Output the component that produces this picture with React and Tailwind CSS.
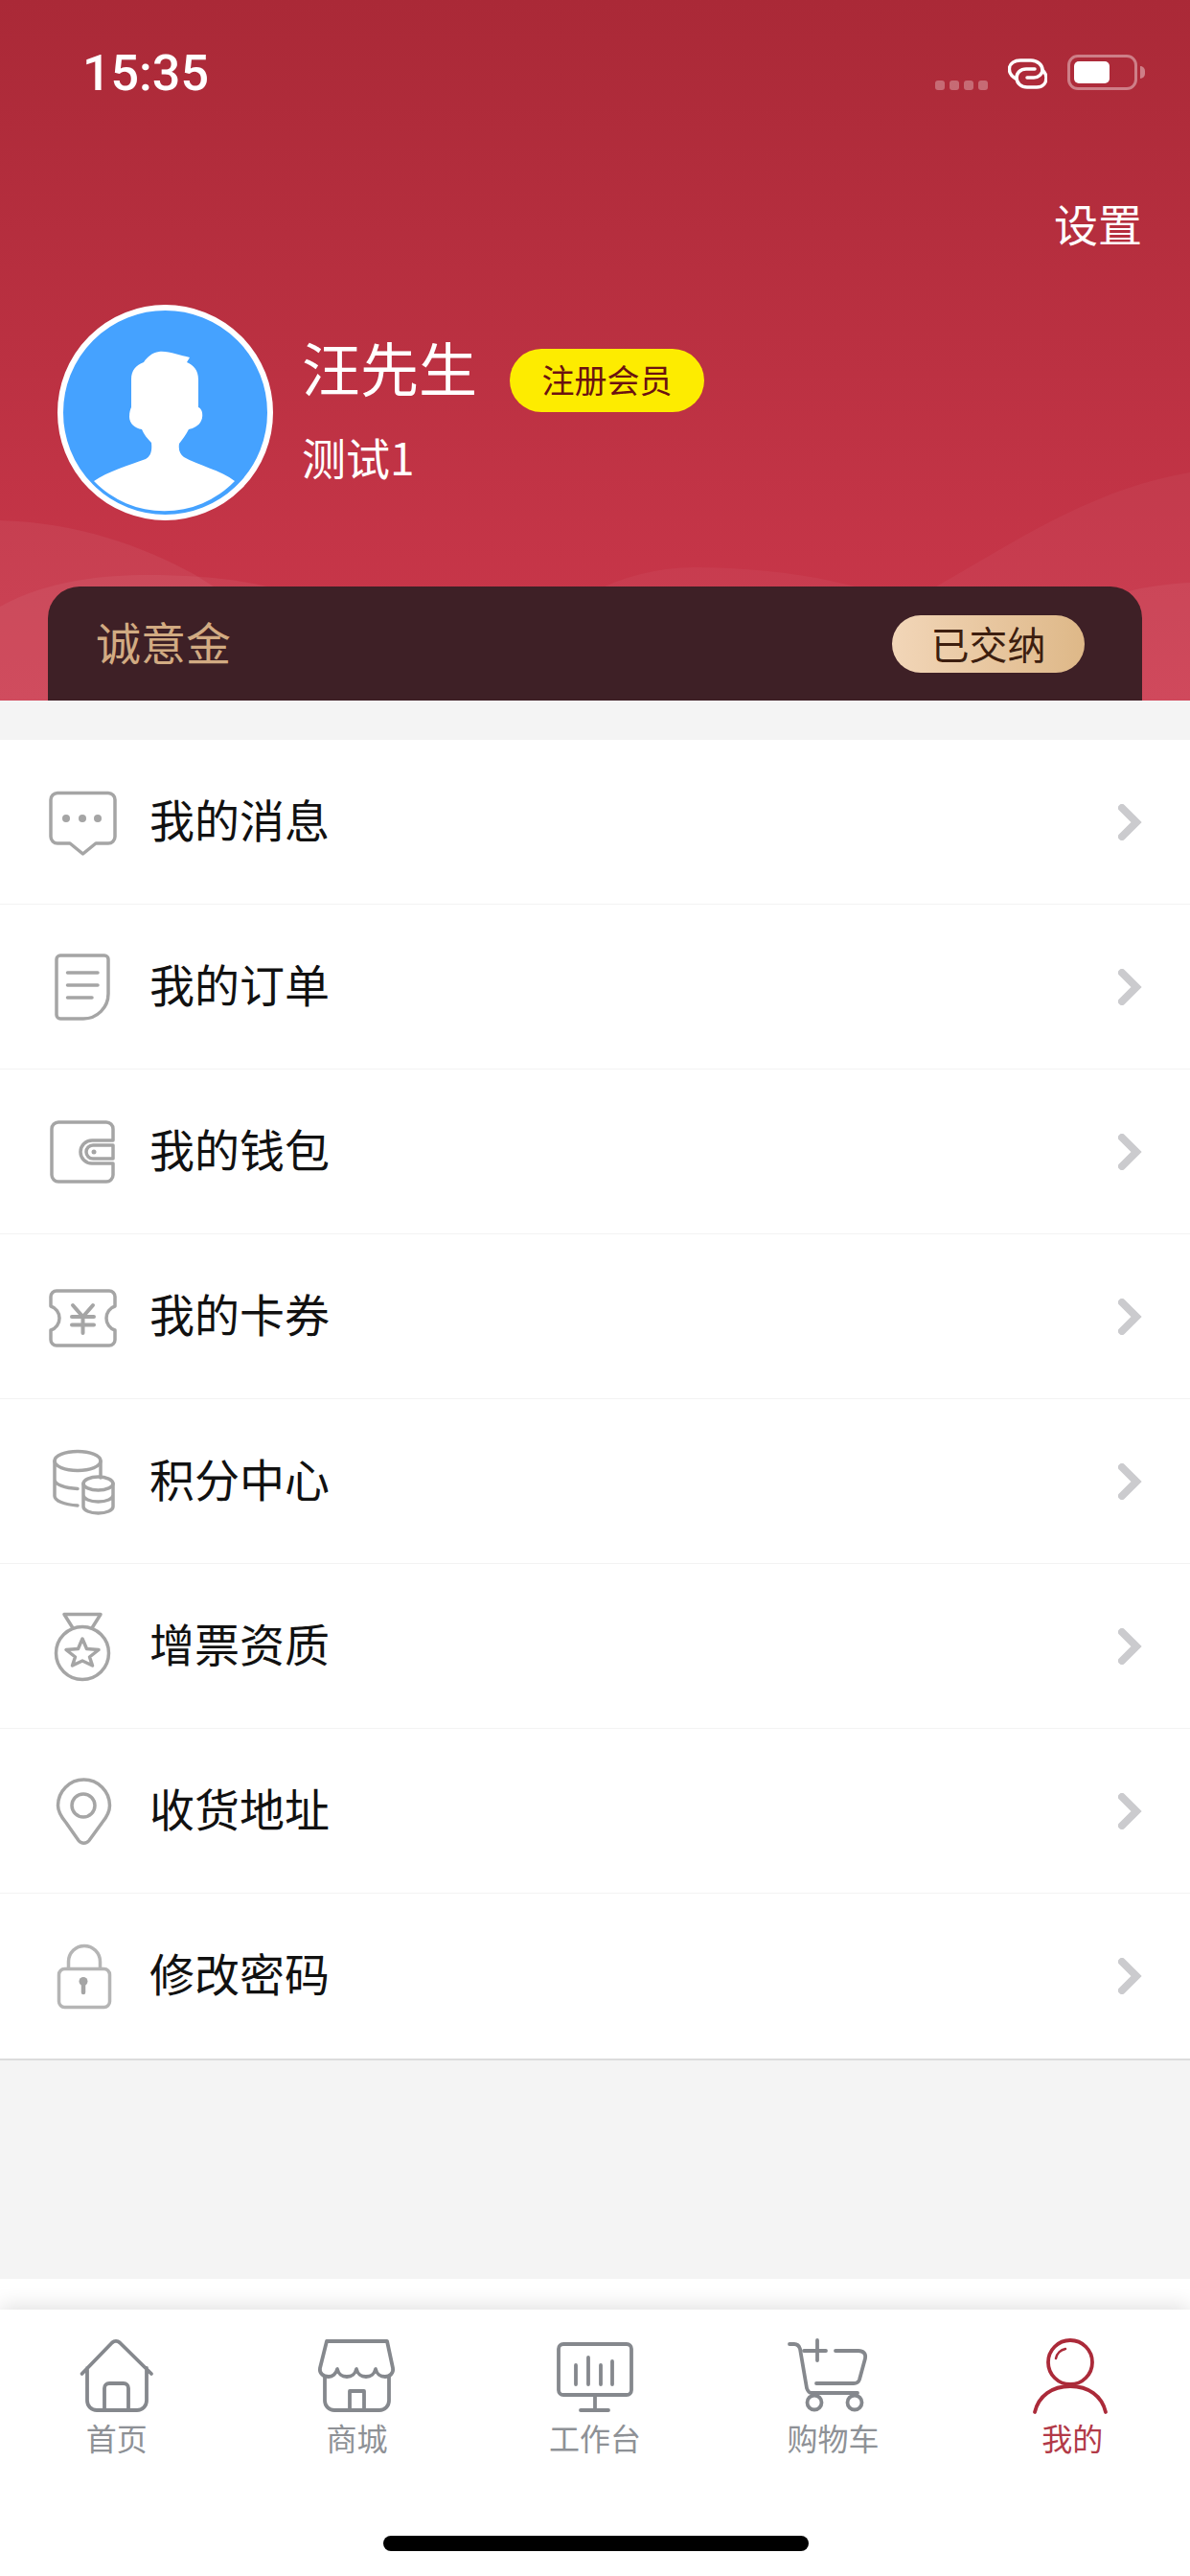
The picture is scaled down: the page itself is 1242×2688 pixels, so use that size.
import React from "react";

const G = "#a5a5a5";
const Ico = ({ children, color = G, sw = 3.5 }) => (
  <svg width="90" height="90" viewBox="0 0 90 90" fill="none" stroke={color} strokeWidth={sw} strokeLinecap="round" strokeLinejoin="round" className="shrink-0">
    {children}
  </svg>
);

const MsgIcon = () => (
  <Ico>
    <path d="M19 14.500H72a7 7 0 0 1 7 7V60a7 7 0 0 1-7 7H59L45.500 78 32 67H19a7 7 0 0 1-7-7V21.500a7 7 0 0 1 7-7z" />
    <circle cx="28" cy="41" r="4" fill={G} stroke="none" />
    <circle cx="45" cy="41" r="4" fill={G} stroke="none" />
    <circle cx="61" cy="41" r="4" fill={G} stroke="none" />
  </Ico>
);
const OrderIcon = () => (
  <Ico>
    <path d="M22 12H68a4 4 0 0 1 4 4V52a26 26 0 0 1-26 26H22a4 4 0 0 1-4-4V16a4 4 0 0 1 4-4z" />
    <path d="M29.500 30H61M29.500 43H61M29.500 56H55" />
  </Ico>
);
const WalletIcon = () => (
  <Ico>
    <path d="M77 33V21a7 7 0 0 0-7-7H20a7 7 0 0 0-7 7V69a7 7 0 0 0 7 7H70a7 7 0 0 0 7-7V57H55a12 12 0 0 1 0-24H77" />
    <path d="M77 38H56a7 7 0 0 0 0 14H77V38z" />
    <circle cx="57" cy="45" r="2.500" fill={G} stroke="none" />
  </Ico>
);
const TicketIcon = () => (
  <Ico>
    <path d="M18 18H73a6 6 0 0 1 6 6V34a13 13 0 0 0-9 12.500A13 13 0 0 0 79 59V69a6 6 0 0 1-6 6H18a6 6 0 0 1-6-6V59a13 13 0 0 0 9-12.500A13 13 0 0 0 12 34V24a6 6 0 0 1 6-6z" />
    <path d="M35 33L45.500 45 56 33M34 45H57M34 53.500H57M45.500 45V62" strokeWidth="4" />
  </Ico>
);
const CoinsIcon = () => (
  <Ico>
    <ellipse cx="40" cy="23.500" rx="24" ry="10" />
    <path d="M16 23.500V60C16 65 26 69 40 70M16 43C16 48 27 52 40 52.500M64 23.500V41" />
    <ellipse cx="61.500" cy="47" rx="15.500" ry="7" />
    <path d="M46 47V71C46 75 53 78 61.500 78S77 75 77 71V47M46 59C46 63 53 66 61.500 66S77 63 77 59" />
  </Ico>
);
const MedalIcon = () => (
  <Ico>
    <circle cx="45" cy="52" r="27.500" />
    <path d="M34.500 25L26 11.500H64L55.500 25" />
    <path d="M45 37L49.500 47.500 62 48.500 52.500 56 55.500 65 45 60 34.500 65 37.500 56 28 48.500 40.500 47.500z" />
  </Ico>
);
const PinIcon = () => (
  <Ico>
    <path d="M46.500 12a27 27 0 0 1 27 27c0 7-3 12-8 18L52 75.500a7 7 0 0 1-11 0L28 57c-5-6-8.500-11-8.500-18a27 27 0 0 1 27-27z" />
    <circle cx="46" cy="39" r="12" />
  </Ico>
);
const LockIcon = () => (
  <Ico color="#b5b5b5">
    <rect x="20.500" y="37.500" width="53" height="40" rx="6" />
    <path d="M30.500 37V30a16.500 16.500 0 0 1 33 0V37" />
    <circle cx="46" cy="50.500" r="4.500" fill="#a5a5a5" stroke="none" />
    <path d="M46 51V62" stroke="#a5a5a5" strokeWidth="4.500" />
  </Ico>
);

const rows = [
  ["我的消息", MsgIcon],
  ["我的订单", OrderIcon],
  ["我的钱包", WalletIcon],
  ["我的卡券", TicketIcon],
  ["积分中心", CoinsIcon],
  ["增票资质", MedalIcon],
  ["收货地址", PinIcon],
  ["修改密码", LockIcon],
];

const Tab = ({ label, active, labelClass = "", children }) => (
  <div className="flex flex-col items-center">
    <svg width="80" height="80" viewBox="0 0 80 80" fill="none" stroke={active ? "#ab2a39" : "#85888d"} strokeWidth="3.800" strokeLinecap="round" strokeLinejoin="round" className="overflow-visible">
      {children}
    </svg>
    <span className={`mt-[6px] text-[32px] leading-[34px] ${labelClass} ${active ? "text-[#b23a48]" : "text-[#8e9196]"}`}>{label}</span>
  </div>
);

export default function App() {
  return (
    <div className="w-[1242px] h-[2688px] flex flex-col bg-[#f4f4f4] overflow-hidden font-['Noto_Sans_CJK_SC','Liberation_Sans',sans-serif]">
      <header className="relative h-[731px] shrink-0 flex flex-col bg-gradient-to-b from-[#aa2937] to-[#cc384c]">
        <svg className="absolute inset-0" width="1242" height="731" viewBox="0 0 1242 731" fill="#ffffff" fillOpacity="0.055">
          <path d="M0 543C80 545 150 570 204 600C260 635 330 680 420 731H0Z" />
          <path d="M0 633C50 605 110 600 153 600C210 600 260 605 300 618C360 640 420 680 480 731H0Z" />
          <path d="M480 731C560 640 640 592 724 592C790 592 850 600 900 614C960 632 1000 660 1040 731Z" fillOpacity="0.04" />
          <path d="M840 731C900 660 950 628 977 612C1060 565 1140 510 1242 493V731Z" fillOpacity="0.04" />
          <path d="M980 731C1100 630 1170 612 1242 608V731Z" />
        </svg>

        <div className="relative flex justify-between pt-[51px] pl-[86px] pr-[55px]">
          <span className="font-['Roboto',sans-serif] font-medium text-[52px] leading-[51px] text-white">15:35</span>
          <div className="flex items-end h-[37px] mt-[6px]">
            <div className="flex gap-[5px]">
              <i className="w-[10px] h-[10px] rounded-[3px] bg-white/30" />
              <i className="w-[10px] h-[10px] rounded-[3px] bg-white/30" />
              <i className="w-[10px] h-[10px] rounded-[3px] bg-white/30" />
              <i className="w-[10px] h-[10px] rounded-[3px] bg-white/30" />
            </div>
            <svg className="ml-[21px] mb-[1px]" width="41" height="32" viewBox="0 0 41 32" fill="none" stroke="#fff" strokeWidth="3.500" strokeLinecap="round">
              <path d="M8 21C3 18 1 14 1.500 10C2 5 7 2 13 2H24C31 2 36 7 36 12C36 16 32 20 27 20H20" />
              <path d="M28 11H19C13 11 9 15 9 20C9 26 14 30 20 30H30C36 30 40 26 40 20C40 17 38 14 36 12" />
            </svg>
            <div className="ml-[21px] w-[73px] h-[37px] rounded-[11px] border-[3px] border-white/40 p-[4px] flex relative">
              <div className="w-[37px] h-full rounded-[5px] bg-white" />
              <div className="absolute right-[-11px] top-[9px] w-[5px] h-[13px] rounded-r-full bg-white/40" />
            </div>
          </div>
        </div>

        <div className="relative mt-[100px] pr-[50px] text-right text-[46px] leading-[60px] text-white">设置</div>

        <div className="relative mt-[56px] pl-[60px] flex">
          <div className="w-[225px] h-[225px] rounded-full bg-[#45a2ff] border-[6px] border-white overflow-hidden shrink-0">
            <svg width="213" height="213" viewBox="0 0 213 213" fill="#fff">
              <path d="M100 43C110 42 122 47 132 49L129 54C136 57 141 62 141 72V101C146 103 146 111 144 115C142 120 136 123 131 124C128 130 124 135 121 139C120 146 122 150 126 153C140 161 165 167 179 178A102 102 0 0 1 32 178C46 168 70 161 86 155C91 152 93 147 92 138C88 134 84 129 82 124C75 123 69 118 69 111C69 106 70 103 71 101V72C71 62 76 57 84 54C88 48 93 44 100 43Z" />
            </svg>
          </div>
          <div className="ml-[30px] pt-[29px] text-white">
            <div className="flex items-start">
              <span className="text-[61px] leading-[72px]">汪先生</span>
              <span className="ml-[34px] mt-[17px] w-[203px] h-[66px] pb-[3px] rounded-full bg-[#fdec00] text-[#6b1210] text-[34px] flex items-center justify-center">注册会员</span>
            </div>
            <div className="mt-[16px] text-[46px] leading-[60px]">测试1</div>
          </div>
        </div>

        <div className="relative mt-auto mx-[50px] h-[119px] rounded-t-[33px] bg-[#3e2026] flex items-center justify-between pl-[50px] pr-[60px]">
          <span className="pb-[5px] text-[47px] leading-[60px] text-[#d2ab82]">诚意金</span>
          <span className="w-[201px] h-[60px] pb-[2px] rounded-full bg-gradient-to-r from-[#f2d6b8] to-[#deb888] text-[#3d1e0f] text-[40px] flex items-center justify-center">已交纳</span>
        </div>
      </header>

      <div className="h-[41px] shrink-0" />

      <main className="bg-white shrink-0 border-b-2 border-[#dcdcdc]">
        {rows.map(([label, Icon], i) => (
          <div key={label} className={`h-[172px] flex items-center pl-[41px] pr-[50px] ${i < 7 ? "border-b border-[#f3f3f3]" : ""}`}>
            <Icon />
            <span className="ml-[25px] pb-[8px] text-[47px] leading-[60px] text-[#111111]">{label}</span>
            <svg className="ml-auto" width="25" height="38" viewBox="0 0 25 38" fill="none" stroke="#cbcbce" strokeWidth="8" strokeLinejoin="miter" strokeLinecap="round">
              <path d="M4 4L19 19 4 34" />
            </svg>
          </div>
        ))}
      </main>

      <div className="flex-1" />

      <div className="h-[32px] shrink-0 bg-white" />
      <nav className="relative h-[278px] shrink-0 bg-white shadow-[0_-4px_20px_rgba(0,0,0,0.12)]">
        <div className="grid grid-cols-5 pt-[30px]">
          <Tab label="首页" labelClass="mr-[5px]">
            <path d="M1.500 37L33 4.500a6 6 0 0 1 8 0L74 37M7 31V65a10 10 0 0 0 10 10H59a10 10 0 0 0 10-10V31M25 75V52a5 5 0 0 1 5-5H45a5 5 0 0 1 5 5V75" />
          </Tab>
          <Tab label="商城">
            <path d="M8 3H71L77 31C78 36 74 40 69 40C64 40 60 37 59 32C58 37 54 40 49 40C44 40 40 37 39 32C38 37 34 40 29 40C24 40 20 37 19 32C18 37 14 40 10 40C4 40 0 36 1 31Z" />
            <path d="M6 40V65a10 10 0 0 0 10 10H63a10 10 0 0 0 10-10V40M32 75V55H47V75" />
          </Tab>
          <Tab label="工作台">
            <rect x="2" y="6" width="76" height="53" rx="5" />
            <path d="M40 59V75M25 75H54M20 28V48M33 20V48M46 28V48M58 24V48" />
          </Tab>
          <Tab label="购物车">
            <path d="M-5 6H0C3 6 5 8 6 11L13 52C14 55 15 57 18 57H66" />
            <path d="M24 2V23M10 13H33M43 13H67C72 13 75 16 74 21L68 43C67 46 65 47 62 47H23" />
            <circle cx="21" cy="67" r="7.500" />
            <circle cx="63" cy="67" r="7.500" />
          </Tab>
          <Tab label="我的" active labelClass="ml-[3px]">
            <circle cx="39" cy="25" r="23" />
            <path d="M2 77C6 60 20 50 39 50S72 60 76 77" />
            <path d="M24 21C25 16 29 12 34 11" strokeWidth="2.500" />
          </Tab>
        </div>
        <div className="absolute left-[400px] top-[236px] w-[444px] h-[16px] rounded-full bg-black" />
      </nav>
    </div>
  );
}
